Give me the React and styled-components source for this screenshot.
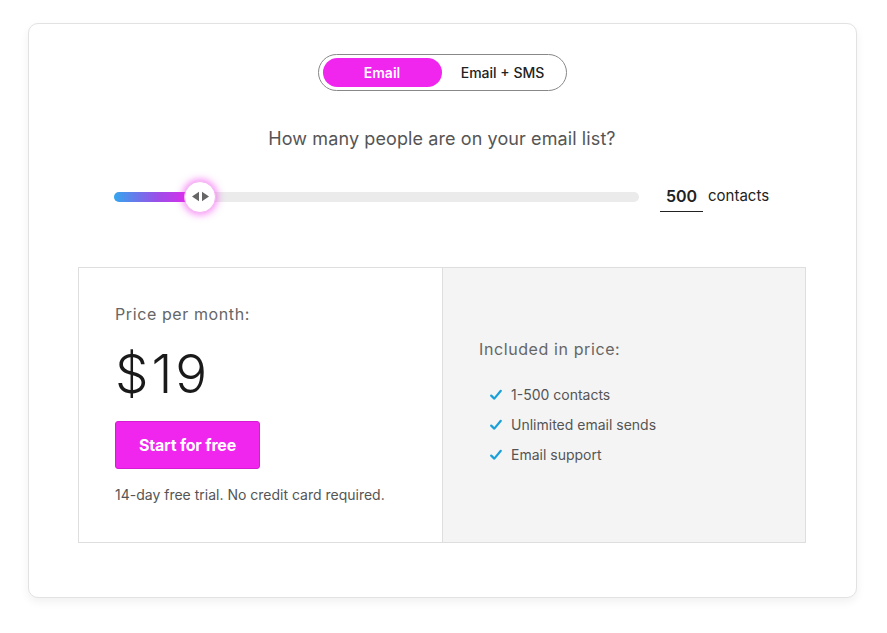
import React from "react";
import styled, { createGlobalStyle } from "styled-components";

const Global = createGlobalStyle`
  html, body { margin: 0; padding: 0; background: #fff; }
  body { font-family: "Inter", "Noto Sans", sans-serif; color: #222; }
`;

const Page = styled.div`
  padding: 23px 31px 35px 28px;
`;

const Card = styled.div`
  width: 829px;
  height: 575px;
  box-sizing: border-box;
  border: 1px solid #e2e2e2;
  border-radius: 10px;
  box-shadow: 0 4px 10px rgba(0, 0, 0, 0.06);
  background: #fff;
  padding: 30px 50px 0 49px;
  display: flex;
  flex-direction: column;
  align-items: center;
`;

const Toggle = styled.div`
  display: flex;
  width: 249px;
  height: 37px;
  box-sizing: border-box;
  border: 1px solid #888;
  border-radius: 19px;
  padding: 3px 4px;
  gap: 2px;
`;

const ToggleOption = styled.div`
  flex: ${(p) => (p.$active ? "0 0 119px" : "1")};
  border-radius: 15px;
  display: flex;
  align-items: center;
  justify-content: center;
  font-size: 14px;
  font-weight: ${(p) => (p.$active ? 600 : 500)};
  color: ${(p) => (p.$active ? "#fff" : "#222")};
  background: ${(p) => (p.$active ? "#f025ee" : "transparent")};
  padding-bottom: 1px;
`;

const Question = styled.div`
  margin-top: 37px;
  font-size: 18px;
  color: #555;
  letter-spacing: 0.1px;
`;

const SliderRow = styled.div`
  margin-top: 32px;
  display: flex;
  align-items: center;
  width: 656px;
`;

const Track = styled.div`
  position: relative;
  width: 525px;
  height: 10px;
  border-radius: 5px;
  background: #ebebeb;
`;

const Fill = styled.div`
  height: 100%;
  border-radius: 5px;
  background: linear-gradient(90deg, #34a6ee 0%, #9b4fe9 50%, #f022ee 100%);
`;

const Thumb = styled.div`
  position: absolute;
  top: 50%;
  width: 32px;
  height: 32px;
  margin: -16px 0 0 -16px;
  box-sizing: border-box;
  border-radius: 50%;
  background: #fff;
  border: 1px solid #f5b5f4;
  box-shadow: 0 0 7px 2px rgba(240, 40, 238, 0.5);
  display: flex;
  align-items: center;
  justify-content: center;
`;

const Count = styled.div`
  margin-left: 21px;
  margin-top: 2px;
  width: 43px;
  border-bottom: 1.5px solid #222;
  text-align: center;
  font-size: 16px;
  font-weight: 600;
  padding: 3px 0 5px;
  color: #222;
`;

const Unit = styled.div`
  margin-left: 5px;
  font-size: 15px;
  color: #222;
  padding-bottom: 2px;
`;

const Pricing = styled.div`
  margin-top: 55px;
  align-self: stretch;
  display: grid;
  grid-template-columns: 363px 1fr;
  height: 276px;
  box-sizing: border-box;
  border: 1px solid #dedede;
`;

const LeftPane = styled.div`
  padding: 36px 36px 0 36px;
  display: flex;
  flex-direction: column;
  align-items: flex-start;
`;

const RightPane = styled.div`
  background: #f4f4f4;
  border-left: 1px solid #dedede;
  padding: 71px 36px 0 36px;
`;

const Label = styled.div`
  font-size: 16px;
  color: #666;
  letter-spacing: 0.6px;
`;

const Price = styled.div`
  margin-top: 19px;
  font-size: 53px;
  font-weight: 300;
  color: #1a1a1a;
  line-height: 62px;
  letter-spacing: 3px;
`;

const StartButton = styled.button`
  margin-top: 16px;
  width: 145px;
  height: 48px;
  border: 1px solid #d51cd3;
  border-radius: 3px;
  background: #f025ee;
  color: #fff;
  font-family: inherit;
  font-size: 16px;
  font-weight: 700;
  letter-spacing: -0.2px;
  cursor: pointer;
`;

const Note = styled.div`
  margin-top: 17px;
  font-size: 14px;
  color: #555;
`;

const List = styled.ul`
  list-style: none;
  margin: 26px 0 0 0;
  padding: 0 0 0 11px;
  display: flex;
  flex-direction: column;
  gap: 11px;
`;

const Item = styled.li`
  display: flex;
  align-items: center;
  gap: 9px;
  font-size: 14px;
  color: #555;
  line-height: 19px;
`;

const Check = () => (
  <svg width="12" height="12" viewBox="0 0 12 12">
    <path d="M1.2 6.6 L4.3 9.6 L10.8 1.8" fill="none" stroke="#1aa0d8" strokeWidth="2.2" strokeLinecap="round" strokeLinejoin="round" />
  </svg>
);

const Arrows = () => (
  <svg width="19" height="11" viewBox="0 0 19 11">
    <path d="M1 5.5 L8 0.8 L8 10.2 Z" fill="#666" />
    <path d="M18 5.5 L11 0.8 L11 10.2 Z" fill="#666" />
  </svg>
);

export default function App() {
  const pct = 16.4;
  return (
    <>
      <Global />
      <Page>
        <Card>
          <Toggle>
            <ToggleOption $active>Email</ToggleOption>
            <ToggleOption>Email + SMS</ToggleOption>
          </Toggle>
          <Question>How many people are on your email list?</Question>
          <SliderRow>
            <Track>
              <Fill style={{ width: `${pct}%` }} />
              <Thumb style={{ left: `${pct}%` }}>
                <Arrows />
              </Thumb>
            </Track>
            <Count>500</Count>
            <Unit>contacts</Unit>
          </SliderRow>
          <Pricing>
            <LeftPane>
              <Label>Price per month:</Label>
              <Price>$19</Price>
              <StartButton>Start for free</StartButton>
              <Note>14-day free trial. No credit card required.</Note>
            </LeftPane>
            <RightPane>
              <Label>Included in price:</Label>
              <List>
                <Item><Check />1-500 contacts</Item>
                <Item><Check />Unlimited email sends</Item>
                <Item><Check />Email support</Item>
              </List>
            </RightPane>
          </Pricing>
        </Card>
      </Page>
    </>
  );
}
